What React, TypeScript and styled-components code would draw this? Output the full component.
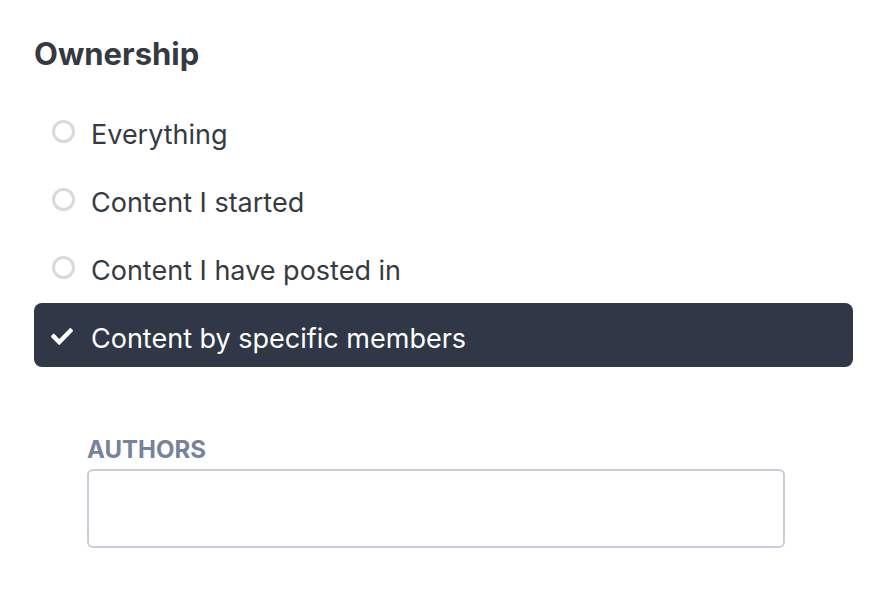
import React from "react";
import styled, { createGlobalStyle } from "styled-components";

const Global = createGlobalStyle`
  html, body { margin: 0; padding: 0; background: #ffffff; }
  body { font-family: Inter, "Noto Sans", "Liberation Sans", sans-serif; -webkit-font-smoothing: antialiased; }
  * { box-sizing: border-box; }
`;

const Page = styled.div`
  width: 876px;
  height: 594px;
  padding: 36px 23px 0 34px;
  display: flex;
  flex-direction: column;
`;

const Heading = styled.h2`
  margin: 0;
  font-size: 31px;
  line-height: 36px;
  font-weight: 700;
  color: #343a40;
`;

const OptionList = styled.div`
  margin-top: 27px;
  display: flex;
  flex-direction: column;
  gap: 4px;
`;

const Option = styled.div<{ $selected?: boolean }>`
  height: 64px;
  display: flex;
  align-items: center;
  gap: 16px;
  padding: 0 17px;
  border-radius: 8px;
  background: ${(p) => (p.$selected ? "#303747" : "transparent")};
  color: ${(p) => (p.$selected ? "#ffffff" : "#363b41")};
  font-size: 27px;
  line-height: 32px;
  cursor: pointer;
`;

const OptionText = styled.span`
  padding-top: 8px;
`;

const IconBox = styled.span`
  width: 24px;
  height: 24px;
  display: flex;
  align-items: center;
  justify-content: center;
  flex-shrink: 0;
`;

const Radio = styled.span`
  width: 23px;
  height: 23px;
  border-radius: 50%;
  border: 3px solid #d9d9d9;
`;

const CheckSvg = styled.svg`
  width: 22px;
  height: 17px;
  margin-left: -3px;
  margin-top: 2px;
  flex-shrink: 0;
`;

const AuthorsField = styled.div`
  margin-top: 69px;
  margin-left: 53px;
  width: 698px;
  display: flex;
  flex-direction: column;
  gap: 5px;
`;

const Label = styled.label`
  font-size: 24px;
  line-height: 28px;
  font-weight: 700;
  color: #77839a;
`;

const Input = styled.input`
  height: 79px;
  width: 100%;
  border: 2px solid #c9ced8;
  border-radius: 6px;
  background: #fff;
  outline: none;
  font-size: 22px;
  padding: 0 14px;
`;

const options = [
  "Everything",
  "Content I started",
  "Content I have posted in",
  "Content by specific members",
];

export default function App() {
  const selected = 3;
  return (
    <>
      <Global />
      <Page>
        <Heading>Ownership</Heading>
        <OptionList>
          {options.map((label, i) => (
            <Option key={label} $selected={i === selected}>
              <IconBox>
                {i === selected ? (
                  <CheckSvg viewBox="0 64 512 384" preserveAspectRatio="none">
                    <path
                      fill="#ffffff"
                      d="M173.9 439.4L7.5 273c-10-10-10-26.2 0-36.2l36.2-36.2c10-10 26.2-10 36.2 0L192 312.7 432.1 72.6c10-10 26.2-10 36.2 0l36.2 36.2c10 10 10 26.2 0 36.2L210.1 439.4c-10 10-26.2 10-36.2 0z"
                    />
                  </CheckSvg>
                ) : (
                  <Radio />
                )}
              </IconBox>
              <OptionText>{label}</OptionText>
            </Option>
          ))}
        </OptionList>
        <AuthorsField>
          <Label>AUTHORS</Label>
          <Input type="text" />
        </AuthorsField>
      </Page>
    </>
  );
}
